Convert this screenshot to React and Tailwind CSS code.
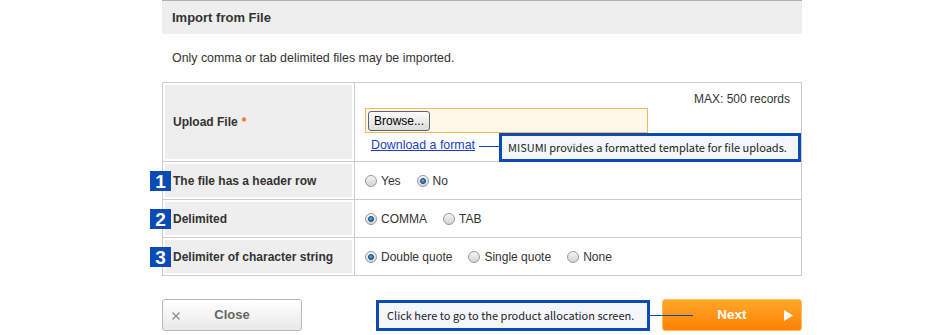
import React from "react";

function Radio({ checked, label, last }) {
  return (
    <label className={"flex items-center " + (last ? "" : "mr-[16px]")}>
      <span className="relative w-[12px] h-[12px] rounded-full border border-[#9a9a9a] bg-gradient-to-b from-[#f4f4f4] to-[#d4d4d4] flex items-center justify-center">
        {checked && (
          <span className="w-[6px] h-[6px] rounded-full bg-[radial-gradient(circle_at_40%_35%,#5fb4ee,#0a5a9c)] border border-[#0b3f6e]" />
        )}
      </span>
      <span className="ml-[4px] text-[12px] text-[#333]">{label}</span>
    </label>
  );
}

function Badge({ n }) {
  return (
    <div className="absolute left-[-13px] top-[9px] w-[21px] h-[20px] bg-[#0a4bb5] text-white flex items-center justify-center text-[19px] font-bold leading-none">
      {n}
    </div>
  );
}

function Row({ n, label, children }) {
  return (
    <div className="relative flex h-[38px] border-t border-[#cccccc]">
      {n && <Badge n={n} />}
      <div className="w-[192px] p-[2px] border-r border-[#cccccc]">
        <div className="h-full bg-[#eeeeee] flex items-center pl-[8px] text-[12px] font-bold text-[#333]">
          {label}
        </div>
      </div>
      <div className="flex-1 flex items-center pl-[10px]">{children}</div>
    </div>
  );
}

export default function App() {
  return (
    <div className="w-[950px] h-[335px] bg-white overflow-hidden font-['Liberation_Sans',Arial,sans-serif] text-[#333]">
      <div className="ml-[162px] w-[640px]">
        <div className="h-[34px] bg-[#eeeeee] border-t border-[#b0b0b0] flex items-center pl-[10px] text-[13px] font-bold text-[#333]">
          Import from File
        </div>
        <div className="h-[48px] flex items-center pl-[10px] text-[12.4px] text-[#333]">
          Only comma or tab delimited files may be imported.
        </div>

        <div className="relative border border-[#cccccc]">
          <div className="flex h-[78px]">
            <div className="w-[192px] p-[2px] border-r border-[#cccccc]">
              <div className="h-full bg-[#eeeeee] flex items-center pl-[8px] text-[12px] font-bold text-[#333]">
                Upload File<span className="ml-[4px] text-[#ff6600]">*</span>
              </div>
            </div>
            <div className="flex-1 pl-[10px] pr-[11px] pt-[8px]">
              <div className="text-right text-[12px] leading-[16px] text-[#333]">MAX: 500 records</div>
              <div className="mt-[1px] w-[283px] h-[25px] border border-[#f8b85c] bg-[#fff7e8] flex items-center pl-[2px]">
                <button className="w-[62px] h-[20px] rounded-[3px] border border-[#5a6670] bg-gradient-to-b from-[#fdfdfd] to-[#dcdcdc] text-[12px] text-black leading-none">
                  Browse...
                </button>
              </div>
              <div className="mt-[4px] pl-[6px] text-[12.4px] leading-[16px]">
                <span className="text-[#1a3fc4] underline">Download a format</span>
              </div>
            </div>
          </div>

          <Row n="1" label="The file has a header row">
            <Radio label="Yes" />
            <Radio label="No" checked last />
          </Row>
          <Row n="2" label="Delimited">
            <Radio label="COMMA" checked />
            <Radio label="TAB" last />
          </Row>
          <Row n="3" label="Delimiter of character string">
            <Radio label="Double quote" checked />
            <Radio label="Single quote" />
            <Radio label="None" last />
          </Row>

          <div className="absolute left-[316px] top-[63px] w-[22px] h-[1px] bg-[#0a4bb5]" />
          <div className="absolute left-[336px] top-[50px] w-[302px] h-[29px] border-[3px] border-[#0a4bb5] bg-[#f3f7fc] flex items-center pl-[6px] text-[11px] text-[#222] font-['Noto_Sans_CJK_JP',sans-serif] whitespace-nowrap">
            MISUMI provides a formatted template for file uploads.
          </div>
        </div>

        <div className="relative mt-[23px] h-[32px] flex justify-between">
          <button className="relative w-[140px] h-[32px] rounded-[3px] border border-[#b8b8b8] bg-gradient-to-b from-[#ffffff] to-[#e9e9e9] text-[13px] font-bold text-[#666] flex items-center justify-center">
            <svg className="absolute left-[9px] top-[12px]" width="8" height="8" viewBox="0 0 8 8">
              <path d="M0.5 0.5 L7.5 7.5 M7.5 0.5 L0.5 7.5" stroke="#888" strokeWidth="1.1" />
            </svg>
            Close
          </button>
          <button className="relative w-[140px] h-[32px] rounded-[3px] border border-[#ffbe5c] bg-gradient-to-b from-[#ffa826] to-[#ff8000] text-[13.5px] font-bold text-white flex items-center justify-center">
            Next
            <svg className="absolute right-[8px] top-[10px]" width="9" height="11" viewBox="0 0 9 11">
              <polygon points="0,0 9,5.5 0,11" fill="#fff" />
            </svg>
          </button>
          <div className="absolute left-[214px] top-[1px] w-[274px] h-[31px] border-[3px] border-[#0a4bb5] bg-[#f3f7fc] flex items-center pl-[8px] text-[11px] text-[#222] font-['Noto_Sans_CJK_JP',sans-serif] whitespace-nowrap">
            Click here to go to the product allocation screen.
          </div>
          <div className="absolute left-[488px] top-[16px] w-[43px] h-[1px] bg-[#0a4bb5]" />
        </div>
      </div>
    </div>
  );
}
